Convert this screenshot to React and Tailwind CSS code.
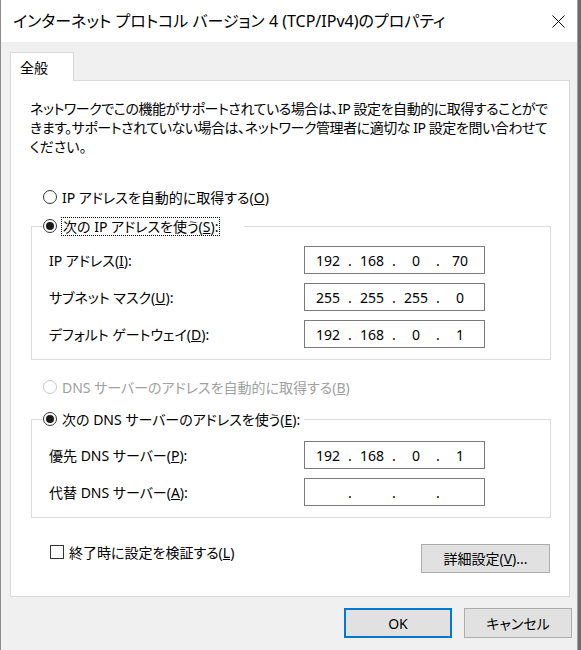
import { Fragment } from "react";

function Radio({ checked, disabled }) {
  return (
    <span
      className={`flex h-[14px] w-[14px] shrink-0 items-center justify-center rounded-full border bg-white ${
        disabled ? "border-[#c8c8c8]" : "border-[#333333]"
      }`}
    >
      {checked && <span className="h-[8px] w-[8px] rounded-full bg-[#1a1a1a]" />}
    </span>
  );
}

function IpBox({ v = ["", "", "", ""] }) {
  return (
    <div className="flex h-[28px] w-[181px] items-center border border-[#7a7a7a] bg-white pl-[6px] text-[14px] text-black">
      {v.map((s, i) => (
        <Fragment key={i}>
          {i > 0 && <span className="w-[10px] text-center">.</span>}
          <span className="w-[34px] text-center">{s}</span>
        </Fragment>
      ))}
    </div>
  );
}

function Row({ label, k, rest, v, first }) {
  return (
    <div className={`flex items-center ${first ? "" : "mt-[9px]"}`}>
      <div className="w-[272px] pl-[17px]">
        {label}(<u>{k}</u>){rest}
      </div>
      <IpBox v={v} />
    </div>
  );
}

export default function App() {
  return (
    <div className="flex h-[650px] w-[581px] font-['Noto_Sans','Noto_Sans_CJK_JP',sans-serif] text-[14px] leading-[19px] text-black [font-feature-settings:'palt']">
      <div className="flex w-[577px] flex-col border-l border-[#8c8c8c] bg-[#f0f0f0]">
        {/* title bar */}
        <div className="flex h-[42px] shrink-0 items-center justify-between bg-white pl-[12px] pr-[12px]">
          <span className="text-[16px]">インターネット プロトコル バージョン 4 (TCP/IPv4)のプロパティ</span>
          <svg width="13" height="13" viewBox="0 0 13 13">
            <path d="M0.5 0.5 L12.5 12.5 M12.5 0.5 L0.5 12.5" stroke="#000" strokeWidth="1" />
          </svg>
        </div>

        {/* tab */}
        <div className="ml-[9px] mt-[10px] flex">
          <div className="relative z-10 -mb-px flex h-[29px] w-[64px] items-center border border-b-0 border-[#d9d9d9] bg-white pl-[9px]">
            全般
          </div>
        </div>

        {/* panel */}
        <div className="ml-[9px] flex h-[517px] w-[560px] flex-col border border-[#d9d9d9] bg-white">
          <p className="whitespace-nowrap pl-[19px] pt-[18px]">
            <span className="tracking-[-0.45px]">
              ネットワークでこの機能がサポートされている場合は、IP 設定を自動的に取得することがで
            </span>
            <br />
            <span className="tracking-[-0.45px]">
              きます。サポートされていない場合は、ネットワーク管理者に適切な IP 設定を問い合わせて
            </span>
            <br />
            ください。
          </p>

          <div className="ml-[32px] mt-[31px] flex h-[20px] items-center gap-[5px]">
            <Radio />
            <span>
              IP アドレスを自動的に取得する(<u>O</u>)
            </span>
          </div>

          <fieldset className="ml-[20px] mt-[9px] w-[520px] border border-[#dcdcdc] pb-[11px]">
            <legend className="ml-[11px] flex h-[20px] items-center gap-[4px] pr-[24px]">
              <Radio checked />
              <span className="border border-dotted border-black px-px leading-[17px]">
                次の IP アドレスを使う(<u>S</u>):
              </span>
            </legend>
            <div className="mt-[10px]">
              <Row first label="IP アドレス" k="I" rest=":" v={["192", "168", "0", "70"]} />
              <Row label="サブネット マスク" k="U" rest=":" v={["255", "255", "255", "0"]} />
              <div className="mt-[1px]" />
              <Row label="デフォルト ゲートウェイ" k="D" rest=":" v={["192", "168", "0", "1"]} />
            </div>
          </fieldset>

          <div className="ml-[32px] mt-[17px] flex h-[20px] items-center gap-[5px] text-[#a0a0a0]">
            <Radio disabled />
            <span>
              DNS サーバーのアドレスを自動的に取得する(<u>B</u>)
            </span>
          </div>

          <fieldset className="ml-[20px] mt-[12px] w-[520px] border border-[#dcdcdc] pb-[11px]">
            <legend className="ml-[11px] flex h-[20px] items-center gap-[5px] pr-[4px]">
              <Radio checked />
              <span>
                次の DNS サーバーのアドレスを使う(<u>E</u>):
              </span>
            </legend>
            <div className="mt-[12px]">
              <Row first label="優先 DNS サーバー" k="P" rest=":" v={["192", "168", "0", "1"]} />
              <div className="mt-[1px]" />
              <Row label="代替 DNS サーバー" k="A" rest=":" />
            </div>
          </fieldset>

          <div className="mt-[24px] flex items-start justify-between pl-[39px] pr-[19px]">
            <label className="flex h-[20px] items-center gap-[5px]">
              <span className="h-[14px] w-[14px] border border-[#333333] bg-white" />
              <span>
                終了時に設定を検証する(<u>L</u>)
              </span>
            </label>
            <button className="mt-[2px] h-[29px] w-[129px] border border-[#adadad] bg-[#e1e1e1]">
              詳細設定(<u>V</u>)...
            </button>
          </div>
        </div>

        {/* buttons */}
        <div className="mt-[11px] flex justify-end gap-[12px] pr-[5px]">
          <button className="h-[30px] w-[108px] border-2 border-[#0078d7] bg-[#e1e1e1]">OK</button>
          <button className="h-[30px] w-[108px] border border-[#adadad] bg-[#e1e1e1]">キャンセル</button>
        </div>
      </div>
      <div className="flex-1 border-l border-[#a0a0a0] bg-[#6b6b6b]" />
    </div>
  );
}
